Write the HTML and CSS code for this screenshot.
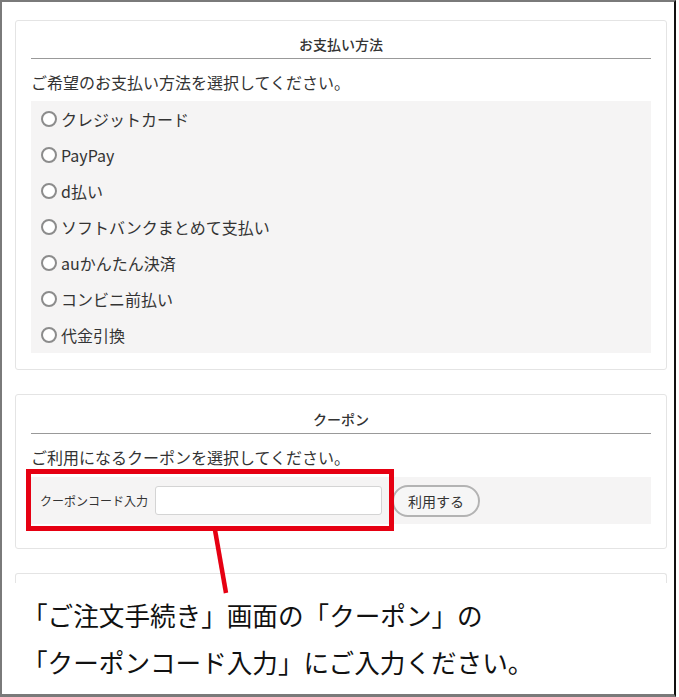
FILE: index.html
```html
<!DOCTYPE html>
<html lang="ja">
    <head>
        <meta charset="UTF-8">
        <meta name="viewport" content="width=device-width, initial-scale=1.0">
        <title>クーポンのご利用方法</title>
        <link rel="stylesheet" href="styles.css">
    </head>
    <body>

        <div class="frame">
            <div class="card card-payment">
                <h3 class="card-title">お支払い方法</h3>
                <p class="card-lead">ご希望のお支払い方法を選択してください。</p>
                <div class="option-box">
                    <label class="option"><span class="radio"></span>クレジットカード</label>
                    <label class="option"><span class="radio"></span>PayPay</label>
                    <label class="option"><span class="radio"></span>d払い</label>
                    <label class="option"><span class="radio"></span>ソフトバンクまとめて支払い</label>
                    <label class="option"><span class="radio"></span>auかんたん決済</label>
                    <label class="option"><span class="radio"></span>コンビニ前払い</label>
                    <label class="option"><span class="radio"></span>代金引換</label>
                </div>
            </div>

            <div class="card card-coupon">
                <h3 class="card-title">クーポン</h3>
                <p class="card-lead">ご利用になるクーポンを選択してください。</p>
                <div class="coupon-box">
                    <span class="coupon-label">クーポンコード入力</span>
                    <input class="coupon-input" type="text">
                    <button class="coupon-button">利用する</button>
                </div>
            </div>

            <div class="card card-next"></div>

            <div class="caption">
                <p>「ご注文手続き」画面の「クーポン」の</p>
                <p>「クーポンコード入力」にご入力ください。</p>
            </div>

            <!-- 注釈 -->
            <div class="mark-box"></div>
            <svg class="mark-line" width="679" height="697" viewBox="0 0 679 697">
                <line x1="215" y1="530" x2="226" y2="593" stroke="#e60012" stroke-width="4.5" />
            </svg>
        </div>

    </body>
</html>
```

FILE: styles.css
```css
* {
    box-sizing: border-box;
}

body {
    margin: 0;
    background-color: #fff;
    font-family: "Noto Sans CJK JP", "Noto Sans", sans-serif;
    color: #333;
}

.frame {
    position: relative;
    width: 676px;
    height: 697px;
    padding: 18px 7px 0 13px;
    border-top: 2px solid #7a7a7a;
    border-left: 2px solid #7a7a7a;
    border-right: 2px solid #111;
    border-bottom: 3px solid #7a7a7a;
    overflow: hidden;
}

.card {
    background-color: #fff;
    border: 1px solid #e4e4e4;
    border-radius: 3px;
    padding: 13px 15px 16px;
}

.card-title {
    margin: 0;
    padding-bottom: 4px;
    border-bottom: 1px solid #999;
    text-align: center;
    font-size: 14px;
    line-height: 20px;
    font-weight: 500;
}

.card-lead {
    margin: 11px 0 7px;
    font-size: 16px;
    line-height: 24px;
}

.option-box {
    background-color: #f5f4f4;
    padding: 0 10px;
}

.option {
    display: flex;
    align-items: center;
    height: 36px;
    font-size: 16px;
    gap: 4px;
}

.radio {
    width: 16px;
    height: 16px;
    border: 2px solid #8c8c8c;
    border-radius: 50%;
    background-color: #fff;
}

.card-coupon {
    margin-top: 24px;
    padding-top: 14px;
    padding-bottom: 24px;
}

.card-coupon .card-lead {
    margin-bottom: 8px;
}

.coupon-box {
    display: flex;
    align-items: center;
    height: 47px;
    padding-left: 9px;
    background-color: #f5f4f4;
}

.coupon-label {
    font-size: 12px;
    width: 115px;
}

.coupon-input {
    width: 227px;
    height: 29px;
    border: 1px solid #d4d4d4;
    border-radius: 3px;
    background-color: #fff;
}

.coupon-button {
    margin-left: 10px;
    width: 88px;
    height: 32px;
    border: 2px solid #b3b3b3;
    border-radius: 16px;
    background-color: #f6f6f6;
    font-family: inherit;
    font-size: 14px;
    color: #333;
}

.card-next {
    margin-top: 24px;
    height: 10px;
    padding: 0;
    border-bottom: none;
    border-radius: 3px 3px 0 0;
}

.caption {
    padding: 8px 0 0 7px;
    font-size: 25.6px;
    line-height: 47px;
    color: #111;
}

.caption p {
    margin: 0;
}

.mark-box {
    position: absolute;
    left: 24px;
    top: 467px;
    width: 368px;
    height: 62px;
    border: 5px solid #e60012;
}

.mark-line {
    position: absolute;
    left: -2px;
    top: -2px;
}
```
